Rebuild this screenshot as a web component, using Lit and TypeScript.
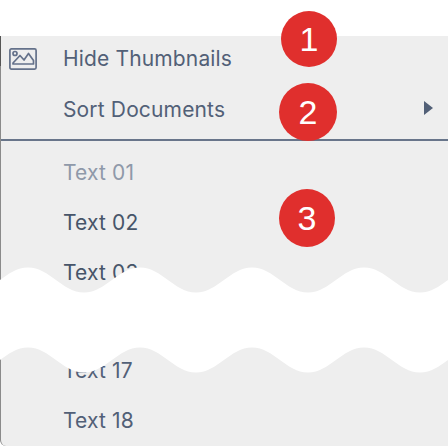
import { LitElement, html, css } from "lit";
import { customElement } from "lit/decorators.js";

const PERIOD = 112;
const AMP = 12.5;

function tearPath() {
  const start = 28 - PERIOD;
  const hi = 20;
  const lo = 100;
  let x = start;
  let d = `M${x} ${hi - AMP}`;
  while (x < 460) {
    d += ` C${x + 22} ${hi - AMP} ${x + 34} ${hi + AMP} ${x + 56} ${hi + AMP}`;
    d += ` C${x + 78} ${hi + AMP} ${x + 90} ${hi - AMP} ${x + 112} ${hi - AMP}`;
    x += PERIOD;
  }
  d += ` L${x} ${lo - AMP}`;
  while (x > start) {
    d += ` C${x - 22} ${lo - AMP} ${x - 34} ${lo + AMP} ${x - 56} ${lo + AMP}`;
    d += ` C${x - 78} ${lo + AMP} ${x - 90} ${lo - AMP} ${x - 112} ${lo - AMP}`;
    x -= PERIOD;
  }
  return d + " Z";
}

@customElement("app-root")
export class AppRoot extends LitElement {
  static styles = css`
    :host {
      display: block;
      position: relative;
      width: 448px;
      height: 446px;
      overflow: hidden;
      background: #fff;
      font-family: Inter, "Noto Sans", sans-serif;
      font-size: 21px;
      letter-spacing: 0.15px;
      color: #526077;
    }
    .top {
      height: 36px;
    }
    .menu {
      height: 410px;
      box-sizing: border-box;
      position: relative;
      background: #eeeeee;
      border-left: 1px solid #8a8a8a;
      border-bottom-left-radius: 6px;
    }
    .menu::before {
      content: "";
      position: absolute;
      left: -1px;
      top: 0;
      width: 1px;
      height: 30px;
      background: #555;
    }
    .group {
      display: flex;
      flex-direction: column;
      padding-bottom: 2px;
      border-bottom: 2px solid #68758a;
    }
    .row {
      flex: none;
      display: flex;
      align-items: center;
      padding-left: 62px;
      position: relative;
    }
    .first {
      height: 45px;
    }
    .second {
      height: 56px;
    }
    .list {
      display: flex;
      flex-direction: column;
      padding-top: 6.5px;
    }
    .list .row {
      height: 50px;
    }
    .gap {
      height: 48px;
    }
    .muted {
      color: #8f99a9;
    }
    .dark {
      color: #475569;
    }
    .thumb {
      position: absolute;
      left: 8px;
      top: 12px;
      width: 28px;
      height: 22px;
    }
    .arrow {
      position: absolute;
      left: 423px;
      top: 20px;
      width: 9px;
      height: 14px;
    }
    .badge {
      position: absolute;
      display: flex;
      align-items: center;
      justify-content: center;
      border-radius: 50%;
      background: #e02f2d;
      color: #fff;
      font-family: "Liberation Sans", Arial, sans-serif;
      font-size: 34px;
      letter-spacing: 0;
      z-index: 3;
    }
    .b1 {
      left: 281px;
      top: 11px;
      width: 56px;
      height: 56px;
    }
    .b2 {
      left: 279px;
      top: 83px;
      width: 58px;
      height: 58px;
    }
    .b3 {
      left: 279px;
      top: 189px;
      width: 56px;
      height: 58px;
    }
    .tear {
      position: absolute;
      left: 0;
      top: 260px;
      width: 448px;
      height: 120px;
      z-index: 2;
    }
  `;

  render() {
    return html`
      <div class="top"></div>
      <div class="menu">
        <div class="group">
          <div class="row first">
            <svg class="thumb" viewBox="0 0 28 22" fill="none" stroke="#64718a" stroke-width="1.7">
              <rect x="0.9" y="0.9" width="26.2" height="20.2" rx="1.5"></rect>
              <circle cx="6" cy="5.5" r="2"></circle>
              <path d="M4 16 L4 15 L11 7.5 L15 12 L19.5 5.5 L24.5 12.5 L24.5 16 Z" stroke-linejoin="round"></path>
            </svg>
            Hide Thumbnails
          </div>
          <div class="row second">
            Sort Documents
            <svg class="arrow" viewBox="0 0 9 14"><path d="M0 0 L9 7 L0 14 Z" fill="#526077"></path></svg>
          </div>
        </div>
        <div class="list">
          <div class="row muted">Text 01</div>
          <div class="row dark">Text 02</div>
          <div class="row dark">Text 03</div>
          <div class="gap"></div>
          <div class="row">Text 17</div>
          <div class="row">Text 18</div>
        </div>
      </div>
      <svg class="tear" viewBox="0 0 448 120">
        <path d="${tearPath()}" fill="#fff"></path>
      </svg>
      <div class="badge b1">1</div>
      <div class="badge b2">2</div>
      <div class="badge b3">3</div>
    `;
  }
}
